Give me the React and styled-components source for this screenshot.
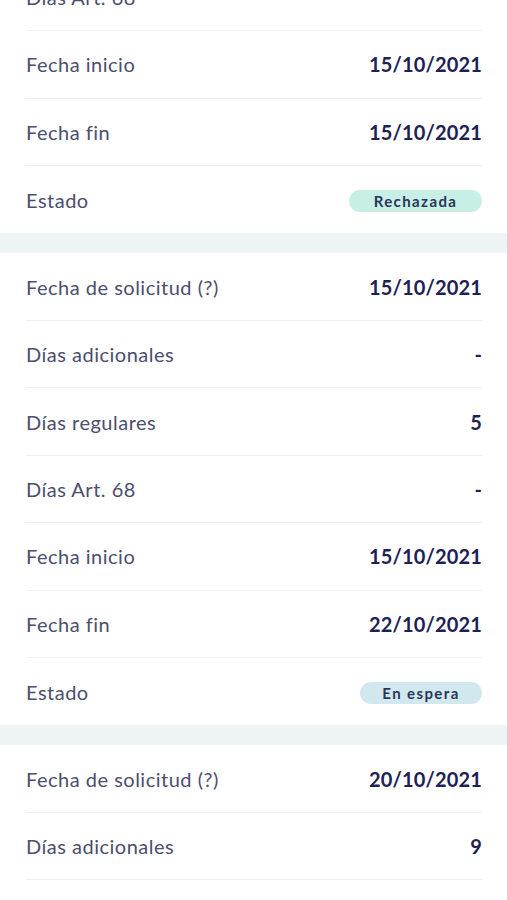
import React from 'react';
import styled, { createGlobalStyle } from 'styled-components';

const GlobalStyle = createGlobalStyle`
  html, body {
    margin: 0;
    padding: 0;
    background: #ffffff;
    overflow: hidden;
  }
  body {
    font-family: Lato, "Noto Sans", sans-serif;
  }
`;

const Page = styled.div`
  width: 507px;
  height: 900px;
  overflow: hidden;
  background: #eef3f3;
`;

// the list is shown scrolled, part of the first card is above the fold
const List = styled.div`
  display: flex;
  flex-direction: column;
  gap: 20px;
  margin-top: -238.5px;
`;

const Card = styled.section`
  background: #ffffff;
  padding: 0 25px 0 26px;
`;

const Row = styled.div`
  display: flex;
  align-items: center;
  justify-content: space-between;
  height: 67.43px;
  box-sizing: border-box;
  border-bottom: 1.5px solid #f0f0f1;

  &:last-child {
    border-bottom: none;
  }
`;

const Label = styled.span`
  font-size: 20px;
  color: #4b4e6e;
  letter-spacing: 0.5px;
`;

const Value = styled.span`
  font-size: 20px;
  font-weight: 700;
  color: #1c2252;
  letter-spacing: 0.15px;
`;

const Badge = styled.span`
  display: inline-flex;
  align-items: center;
  justify-content: center;
  height: 22px;
  width: ${(p) => p.$width}px;
  margin-top: 2px;
  border-radius: 11px;
  background: ${(p) => p.$bg};
  color: #283657;
  font-size: 15px;
  font-weight: 700;
  letter-spacing: 1.4px;
`;

const STATUS = {
  Rechazada: { bg: '#c8efe5', width: 133 },
  'En espera': { bg: '#d2e8ef', width: 122 },
};

const solicitudes = [
  {
    solicitud: '12/10/2021',
    adicionales: '-',
    regulares: '1',
    art68: '-',
    inicio: '15/10/2021',
    fin: '15/10/2021',
    estado: 'Rechazada',
  },
  {
    solicitud: '15/10/2021',
    adicionales: '-',
    regulares: '5',
    art68: '-',
    inicio: '15/10/2021',
    fin: '22/10/2021',
    estado: 'En espera',
  },
  {
    solicitud: '20/10/2021',
    adicionales: '9',
    regulares: '-',
    art68: '-',
    inicio: '25/10/2021',
    fin: '05/11/2021',
    estado: 'En espera',
  },
];

const Solicitud = ({ data }) => (
  <Card>
    <Row>
      <Label>Fecha de solicitud (?)</Label>
      <Value>{data.solicitud}</Value>
    </Row>
    <Row>
      <Label>Días adicionales</Label>
      <Value>{data.adicionales}</Value>
    </Row>
    <Row>
      <Label>Días regulares</Label>
      <Value>{data.regulares}</Value>
    </Row>
    <Row>
      <Label>Días Art. 68</Label>
      <Value>{data.art68}</Value>
    </Row>
    <Row>
      <Label>Fecha inicio</Label>
      <Value>{data.inicio}</Value>
    </Row>
    <Row>
      <Label>Fecha fin</Label>
      <Value>{data.fin}</Value>
    </Row>
    <Row>
      <Label>Estado</Label>
      <Badge $bg={STATUS[data.estado].bg} $width={STATUS[data.estado].width}>
        {data.estado}
      </Badge>
    </Row>
  </Card>
);

const App = () => (
  <>
    <GlobalStyle />
    <Page>
      <List>
        {solicitudes.map((s, i) => (
          <Solicitud key={i} data={s} />
        ))}
      </List>
    </Page>
  </>
);

export default App;
